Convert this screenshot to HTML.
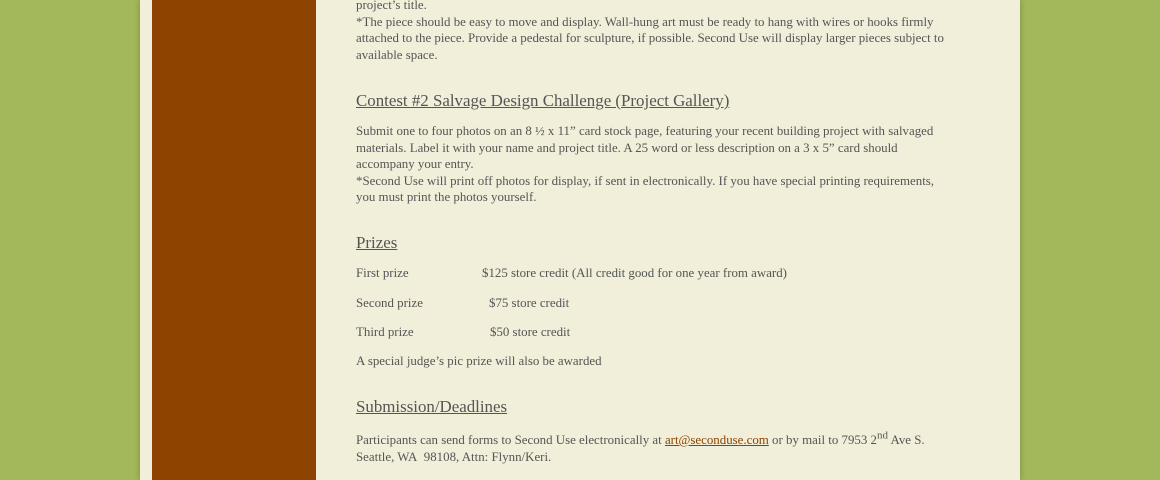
<!DOCTYPE html>
<html><head><style>
html,body{margin:0;padding:0;width:1160px;height:480px;overflow:hidden;background:#a2b85a;}
#panel{position:absolute;left:140px;top:0;width:880px;height:480px;background:#f1efda;box-shadow:0 0 6px rgba(0,0,0,.25);}
#side{position:absolute;left:152px;top:0;width:164px;height:480px;background:#8e4300;}
.t{position:absolute;left:356px;font-family:"Liberation Serif",serif;font-size:12.9px;color:#555;line-height:16.5px;white-space:nowrap;}
.h{position:absolute;left:356px;font-family:"Liberation Serif",serif;font-size:16.9px;color:#555;text-decoration:underline;white-space:nowrap;}
a{color:#8e4300;}
</style></head><body>
<div id="panel"></div><div id="side"></div>
<div class="t" style="top:-3px">project’s title.<br>*The piece should be easy to move and display. Wall-hung art must be ready to hang with wires or hooks firmly<br>attached to the piece. Provide a pedestal for sculpture, if possible. Second Use will display larger pieces subject to<br>available space.</div>
<div class="h" style="top:91px">Contest #2 Salvage Design Challenge (Project Gallery)</div>
<div class="t" style="top:123px">Submit one to four photos on an 8 ½ x 11” card stock page, featuring your recent building project with salvaged<br>materials. Label it with your name and project title. A 25 word or less description on a 3 x 5” card should<br>accompany your entry.<br>*Second Use will print off photos for display, if sent in electronically. If you have special printing requirements,<br>you must print the photos yourself.</div>
<div class="h" style="top:233px">Prizes</div>
<div class="t" style="top:265px">First prize</div><div class="t" style="top:265px;left:482px">$125 store credit (All credit good for one year from award)</div>
<div class="t" style="top:295px">Second prize</div><div class="t" style="top:295px;left:489px">$75 store credit</div>
<div class="t" style="top:324px">Third prize</div><div class="t" style="top:324px;left:490px">$50 store credit</div>
<div class="t" style="top:353px">A special judge’s pic prize will also be awarded</div>
<div class="h" style="top:397px">Submission/Deadlines</div>
<div class="t" style="top:432px">Participants can send forms to Second Use electronically at <a href="#">art@seconduse.com</a> or by mail to 7953 2<sup style="font-size:11px;line-height:0">nd</sup> Ave S.<br>Seattle, WA&nbsp; 98108, Attn: Flynn/Keri.</div>
</body></html>
